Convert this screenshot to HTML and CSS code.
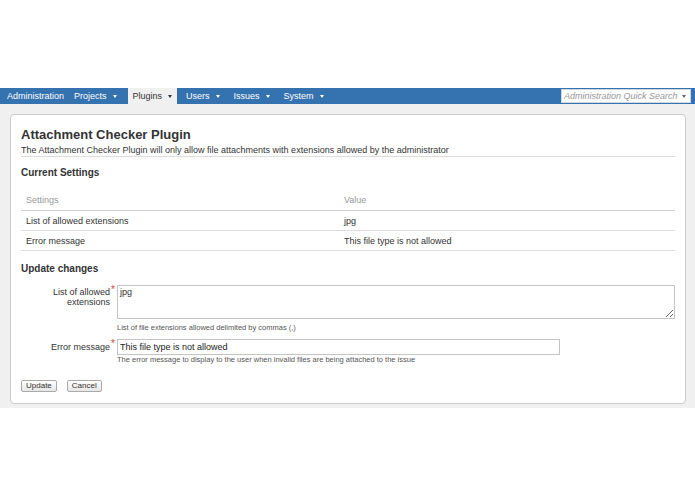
FILE: index.html
```html
<!DOCTYPE html>
<html lang="en">
<head>
<meta charset="utf-8">
<title>Attachment Checker Plugin</title>
<link rel="stylesheet" href="styles.css">
</head>
<body>
<div class="top"></div>
<nav class="nav">
  <a class="nav-item first">Administration</a>
  <a class="nav-item wide">Projects<span class="caret"></span></a>
  <a class="nav-item active">Plugins<span class="caret"></span></a>
  <a class="nav-item">Users<span class="caret"></span></a>
  <a class="nav-item">Issues<span class="caret"></span></a>
  <a class="nav-item">System<span class="caret"></span></a>
  <div class="search"><span class="search-text">Administration Quick Search</span><span class="caret"></span></div>
</nav>
<div class="page">
  <section class="panel">
    <h1 class="title">Attachment Checker Plugin</h1>
    <p class="desc">The Attachment Checker Plugin will only allow file attachments with extensions allowed by the administrator</p>

    <h2 class="section">Current Settings</h2>
    <div class="table">
      <div class="row head"><div class="cell">Settings</div><div class="cell">Value</div></div>
      <div class="row"><div class="cell">List of allowed extensions</div><div class="cell">jpg</div></div>
      <div class="row"><div class="cell">Error message</div><div class="cell">This file type is not allowed</div></div>
    </div>

    <h2 class="section update">Update changes</h2>
    <form class="form">
      <div class="field">
        <label class="label multi">List of allowed<br>extensions</label>
        <span class="req">*</span>
        <div class="control">
          <textarea class="textarea">jpg</textarea>
          <div class="hint hint-first">List of file extensions allowed delimited by commas (,)</div>
        </div>
      </div>
      <div class="field field-second">
        <label class="label single">Error message</label>
        <span class="req">*</span>
        <div class="control">
          <input class="input" type="text" value="This file type is not allowed">
          <div class="hint">The error message to display to the user when invalid files are being attached to the issue</div>
        </div>
      </div>
      <div class="buttons">
        <button class="btn" type="button">Update</button>
        <button class="btn" type="button">Cancel</button>
      </div>
    </form>
  </section>
</div>
</body>
</html>
```

FILE: styles.css
```css
* { box-sizing: border-box; }

html, body {
  margin: 0;
  padding: 0;
  background: #ffffff;
  font-family: "Liberation Sans", Arial, Helvetica, sans-serif;
  color: #333333;
}

.top { height: 88px; }

.nav {
  display: flex;
  align-items: stretch;
  height: 16px;
  background: #3572b0;
  padding-left: 2px;
}

.nav-item {
  display: flex;
  align-items: center;
  padding: 0 5px;
  margin-right: 4px;
  font-size: 9px;
  color: #ffffff;
  text-decoration: none;
  white-space: nowrap;
}

.nav-item.first { margin-right: 0; }
.nav-item.wide { margin-right: 6px; }

.nav-item.active {
  background: #f0f0f0;
  color: #333333;
}

.caret {
  display: inline-block;
  width: 0;
  height: 0;
  margin-left: 6px;
  border-left: 2.5px solid transparent;
  border-right: 2.5px solid transparent;
  border-top: 3px solid currentColor;
}

.search {
  margin-left: auto;
  margin-right: 4px;
  align-self: center;
  width: 130px;
  height: 14px;
  background: #ffffff;
  border: 1px solid #cfd7e2;
  display: flex;
  align-items: center;
  padding: 0 4px 0 2px;
  color: #888888;
}

.search-text {
  font-size: 9px;
  font-style: italic;
  color: #999999;
  white-space: nowrap;
}

.search .caret {
  margin-left: auto;
  color: #666666;
}

.page {
  background: #f0f0f0;
  padding: 10px 9px 4px 10px;
}

.panel {
  background: #ffffff;
  border: 1px solid #cccccc;
  border-radius: 4px;
  padding: 12px 10px 11px 10px;
}

.title {
  margin: 0;
  font-size: 13px;
  line-height: 16px;
  font-weight: bold;
  color: #333333;
}

.desc {
  margin: 0;
  padding-top: 1px;
  font-size: 9px;
  line-height: 12px;
  border-bottom: 1px solid #dddddd;
}

.section {
  margin: 10px 0 0 0;
  font-size: 10px;
  line-height: 12px;
  font-weight: bold;
  color: #333333;
}

.section.update { margin-top: 12px; }

.table {
  margin-top: 11px;
}

.row {
  display: grid;
  grid-template-columns: 318px 1fr;
  height: 20px;
  align-items: center;
  border-bottom: 1px solid #dddddd;
  font-size: 9px;
}

.row.head {
  height: 21px;
  color: #999999;
  border-bottom-color: #cccccc;
}

.cell { padding-left: 5px; }

.form { margin-top: 10px; }

.field {
  display: grid;
  grid-template-columns: 89px 7px 1fr;
  align-items: start;
}

.field-second { margin-top: 6px; }

.label {
  text-align: right;
  font-size: 9px;
  color: #333333;
}

.label.multi {
  padding-top: 3px;
  line-height: 9.5px;
}

.label.single {
  line-height: 16px;
}

.req {
  color: #d04437;
  font-size: 10px;
  line-height: 10px;
  padding-left: 1px;
}

.control { display: flex; flex-direction: column; align-items: flex-start; }

.textarea {
  display: block;
  width: 558px;
  height: 34px;
  margin: 0;
  padding: 1px 2px;
  border: 1px solid #c4c4c4;
  font-family: "Liberation Sans", Arial, Helvetica, sans-serif;
  font-size: 9px;
  line-height: 11px;
  color: #333333;
  resize: both;
}

.input {
  display: block;
  width: 443px;
  height: 16px;
  margin: 0;
  padding: 0 2px;
  border: 1px solid #c4c4c4;
  font-family: "Liberation Sans", Arial, Helvetica, sans-serif;
  font-size: 9px;
  color: #222222;
}

.hint {
  font-size: 7.5px;
  line-height: 10px;
  color: #555555;
  white-space: nowrap;
}

.hint-first { margin-top: 4px; }

.buttons {
  display: flex;
  gap: 10px;
  margin-top: 15px;
}

.btn {
  height: 12px;
  padding: 0 4px;
  margin: 0;
  font-family: "Liberation Sans", Arial, Helvetica, sans-serif;
  font-size: 8px;
  line-height: 10px;
  color: #333333;
  background: linear-gradient(#ffffff, #e6e6e6);
  border: 1px solid #aaaaaa;
  border-radius: 2px;
}
```
